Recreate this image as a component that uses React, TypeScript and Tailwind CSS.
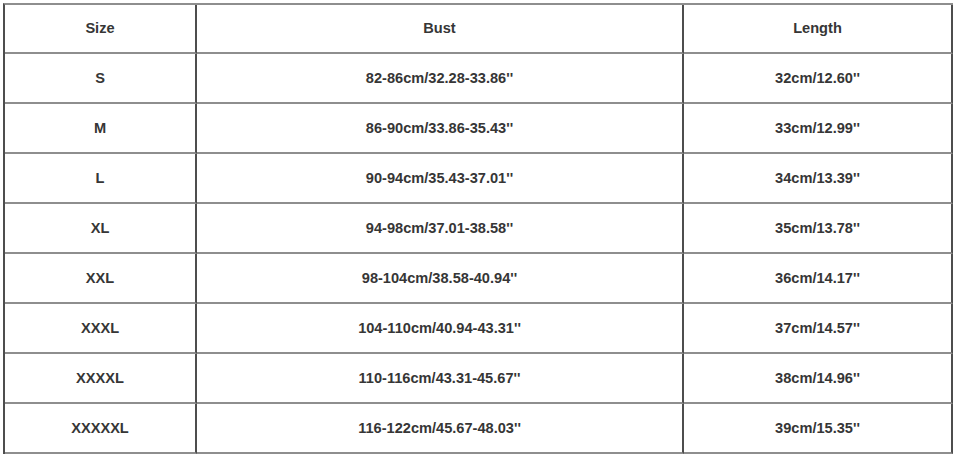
import React from "react";

const rows: [string, string, string][] = [
  ["S", "82-86cm/32.28-33.86''", "32cm/12.60''"],
  ["M", "86-90cm/33.86-35.43''", "33cm/12.99''"],
  ["L", "90-94cm/35.43-37.01''", "34cm/13.39''"],
  ["XL", "94-98cm/37.01-38.58''", "35cm/13.78''"],
  ["XXL", "98-104cm/38.58-40.94''", "36cm/14.17''"],
  ["XXXL", "104-110cm/40.94-43.31''", "37cm/14.57''"],
  ["XXXXL", "110-116cm/43.31-45.67''", "38cm/14.96''"],
  ["XXXXXL", "116-122cm/45.67-48.03''", "39cm/15.35''"],
];

function Cell({ children, first, w }: { children: React.ReactNode; first: boolean; w: string }) {
  return (
    <div
      className={`flex items-center justify-center pt-px border-r-2 border-b-2 border-r-[#4d4d4d] border-b-[#8e8e8e] ${w} ${
        first ? "h-[49px]" : "h-[50px]"
      }`}
    >
      {children}
    </div>
  );
}

export default function App() {
  const all: [string, string, string][] = [["Size", "Bust", "Length"], ...rows];
  return (
    <div className="w-[956px] h-[457px] bg-white pl-[3px] pt-[3px]" style={{ fontFamily: '"Liberation Sans", Arial, sans-serif' }}>
      <div className="w-[950px] border-l-2 border-t-2 border-l-[#4d4d4d] border-t-[#8e8e8e] text-[14.6px] font-bold text-[#363636]">
        {all.map((r, i) => (
          <div key={i} className="flex">
            <Cell first={i === 0} w="w-[192px]">{r[0]}</Cell>
            <Cell first={i === 0} w="w-[487px]">{r[1]}</Cell>
            <Cell first={i === 0} w="w-[269px]">{r[2]}</Cell>
          </div>
        ))}
      </div>
    </div>
  );
}
